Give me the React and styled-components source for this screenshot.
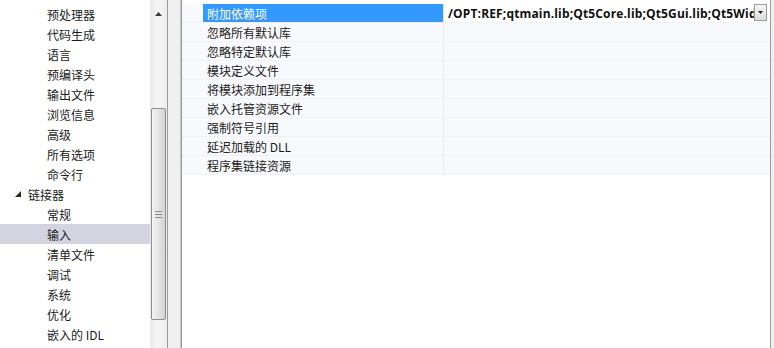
import React from "react";
import styled, { createGlobalStyle } from "styled-components";

const Global = createGlobalStyle`
  html, body { margin: 0; padding: 0; background: #fff; }
  body { font-family: "Noto Sans CJK SC", "Noto Sans", sans-serif; }
`;

const Page = styled.div`
  width: 774px;
  height: 348px;
  display: flex;
  overflow: hidden;
  background: #f0f0f0;
`;

const TreeFrame = styled.div`
  width: 167px;
  height: 348px;
  display: flex;
  background: #fff;
  border-right: 1px solid #9a9a9a;
  flex-shrink: 0;
`;

const Tree = styled.div`
  width: 150px;
  padding-top: 4px;
  display: flex;
  flex-direction: column;
`;

const Node = styled.div`
  height: 20px;
  display: flex;
  align-items: center;
  padding-left: ${(p) => (p.$level === 0 ? 15 : 47)}px;
  gap: 7px;
  font-size: 12px;
  color: #1b1b1b;
  background: ${(p) => (p.$selected ? "#d4d4e0" : "transparent")};
  white-space: nowrap;
`;

const Scrollbar = styled.div`
  width: 17px;
  position: relative;
  background: linear-gradient(to right, #e9e9e9, #f5f5f5 40%, #ececec);
  display: flex;
  flex-direction: column;
  align-items: center;
`;

const ArrowBtn = styled.div`
  height: 17px;
  width: 17px;
  display: flex;
  align-items: center;
  justify-content: center;
  margin-top: 5px;
`;

const Thumb = styled.div`
  position: absolute;
  left: 1px;
  top: 108px;
  width: 13px;
  height: 210px;
  border: 1px solid #8e8e8e;
  border-radius: 2px;
  background: linear-gradient(to right, #f3f3f3, #e4e4e4 50%, #d2d2d2);
  display: flex;
  align-items: center;
  justify-content: center;
`;

const Splitter = styled.div`
  width: 12px;
  flex-shrink: 0;
  background: #f0f0f0;
  border-right: 1px solid #c8c8c8;
`;

const GridFrame = styled.div`
  flex: 1;
  background: #fff;
  border-left: 1px solid #9a9a9a;
  border-right: 1px solid #9a9a9a;
  margin-right: 3px;
  padding-top: 4px;
  display: flex;
  flex-direction: column;
`;

const Row = styled.div`
  height: 19px;
  display: grid;
  grid-template-columns: 21px 241px 1fr;
  background: #f8f9fc;
  border-bottom: 1px solid #f0f1f4;
  box-sizing: border-box;
`;

const Gutter = styled.div`
  background: #f8f9fc;
`;

const NameCell = styled.div`
  display: flex;
  align-items: center;
  padding-left: 4px;
  font-size: 12px;
  color: ${(p) => (p.$selected ? "#ffffff" : "#1b1b1b")};
  background: ${(p) => (p.$selected ? "#3399ff" : "transparent")};
  border-right: 1px solid #e6e8ee;
  white-space: nowrap;
`;

const ValueCell = styled.div`
  position: relative;
  display: flex;
  align-items: center;
  padding-left: 4px;
  background: ${(p) => (p.$active ? "#ffffff" : "transparent")};
  overflow: hidden;
`;

const ValueText = styled.span`
  font-family: "Open Sans", "Noto Sans", sans-serif;
  font-weight: 700;
  font-size: 12px;
  letter-spacing: 0.15px;
  color: #111;
  white-space: nowrap;
  overflow: hidden;
  width: 307px;
`;

const DropBtn = styled.div`
  position: absolute;
  right: 3px;
  top: 0px;
  width: 13px;
  height: 17px;
  border: 1px solid #9c9c9c;
  background: linear-gradient(#f4f4f4, #dcdcdc);
  display: flex;
  align-items: center;
  justify-content: center;
  box-sizing: border-box;
`;

const treeItems = [
  { t: "预处理器" },
  { t: "代码生成" },
  { t: "语言" },
  { t: "预编译头" },
  { t: "输出文件" },
  { t: "浏览信息" },
  { t: "高级" },
  { t: "所有选项" },
  { t: "命令行" },
  { t: "链接器", level: 0 },
  { t: "常规" },
  { t: "输入", selected: true },
  { t: "清单文件" },
  { t: "调试" },
  { t: "系统" },
  { t: "优化" },
  { t: "嵌入的 IDL" },
];

const props = [
  "附加依赖项",
  "忽略所有默认库",
  "忽略特定默认库",
  "模块定义文件",
  "将模块添加到程序集",
  "嵌入托管资源文件",
  "强制符号引用",
  "延迟加载的 DLL",
  "程序集链接资源",
];

export default function App() {
  return (
    <>
      <Global />
      <Page>
        <TreeFrame>
          <Tree>
            {treeItems.map((it) => (
              <Node key={it.t} $level={it.level ?? 1} $selected={it.selected}>
                {it.level === 0 && (
                  <svg width="6" height="6" viewBox="0 0 6 6">
                    <polygon points="6,0 6,6 0,6" fill="#262626" />
                  </svg>
                )}
                {it.t}
              </Node>
            ))}
          </Tree>
          <Scrollbar>
            <ArrowBtn>
              <svg width="7" height="4" viewBox="0 0 7 4">
                <polygon points="0,4 3.5,0 7,4" fill="#3a3a3a" />
              </svg>
            </ArrowBtn>
            <Thumb>
              <svg width="7" height="7" viewBox="0 0 7 7">
                <rect x="0" y="0" width="7" height="1" fill="#8a8a8a" />
                <rect x="0" y="3" width="7" height="1" fill="#8a8a8a" />
                <rect x="0" y="6" width="7" height="1" fill="#8a8a8a" />
              </svg>
            </Thumb>
          </Scrollbar>
        </TreeFrame>
        <Splitter />
        <GridFrame>
          {props.map((p, i) => (
            <Row key={p}>
              <Gutter />
              <NameCell $selected={i === 0}>{p}</NameCell>
              <ValueCell $active={i === 0}>
                {i === 0 && (
                  <>
                    <ValueText>/OPT:REF;qtmain.lib;Qt5Core.lib;Qt5Gui.lib;Qt5Widgets.lib</ValueText>
                    <DropBtn>
                      <svg width="5" height="3" viewBox="0 0 5 3">
                        <polygon points="0,0 5,0 2.5,3" fill="#222" />
                      </svg>
                    </DropBtn>
                  </>
                )}
              </ValueCell>
            </Row>
          ))}
        </GridFrame>
      </Page>
    </>
  );
}
